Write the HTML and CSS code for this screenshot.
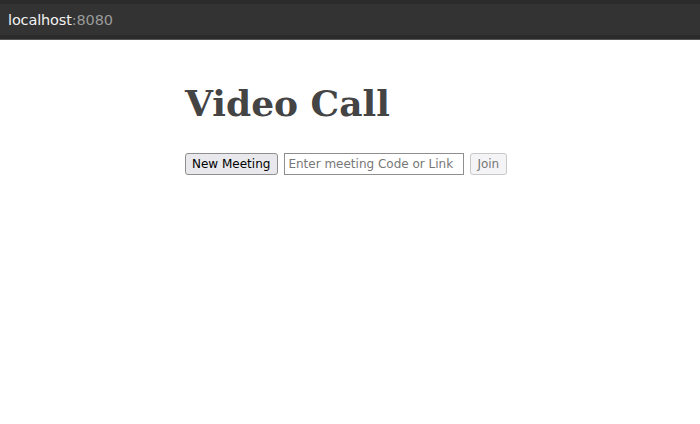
FILE: index.html
```html
<!DOCTYPE html>
<html>
<head>
<meta charset="utf-8">
<link rel="stylesheet" href="styles.css">
</head>
<body>
<div class="urlbar">
  <div class="urlbar-inner"><span class="host">localhost</span><span class="port">:8080</span></div>
</div>
<main class="page">
  <h1 class="title">Video Call</h1>
  <div class="controls">
    <button class="btn">New Meeting</button>
    <input class="code" type="text" placeholder="Enter meeting Code or Link">
    <button class="btn btn-disabled" disabled>Join</button>
  </div>
</main>
</body>
</html>
```
FILE: styles.css
```css
html, body { margin: 0; padding: 0; background: #fff; }
body { width: 700px; height: 424px; overflow: hidden; }
.urlbar {
  height: 40px;
  background: #2b2b2b;
  padding-top: 4px;
  box-sizing: border-box;
  border-bottom: 1px solid #555;
}
.urlbar-inner {
  height: 31px;
  background: #333333;
  display: flex;
  align-items: center;
  padding-left: 8px;
  font-family: "DejaVu Sans", sans-serif;
  font-size: 14.5px;
  letter-spacing: -0.15px;
}
.host { color: #f2f2f2; }
.port { color: #9a9a9a; }
.page { padding: 0 0 0 185px; }
.title {
  font-family: "DejaVu Serif", serif;
  font-weight: bold;
  font-size: 36px;
  color: #444;
  margin: 41px 0 0;
  line-height: 44px;
}
.controls {
  display: flex;
  align-items: center;
  gap: 6px;
  margin-top: 28px;
}
.btn {
  font-family: "DejaVu Sans", sans-serif;
  font-size: 12px;
  height: 22px;
  padding: 0 7px 0 6px;
  border: 1px solid #8f8f8f;
  border-radius: 3px;
  background: #e9e9ed;
  color: #000;
}
.btn-disabled { color: #777; border-color: #c8c8c8; background: #f4f4f6; }
.code {
  font-family: "DejaVu Sans", sans-serif;
  font-size: 12px;
  width: 180px;
  height: 22px;
  box-sizing: border-box;
  border: 1px solid #8f8f8f;
  border-radius: 0;
  padding: 0 3px;
}
.code::placeholder { color: #777; }
```
